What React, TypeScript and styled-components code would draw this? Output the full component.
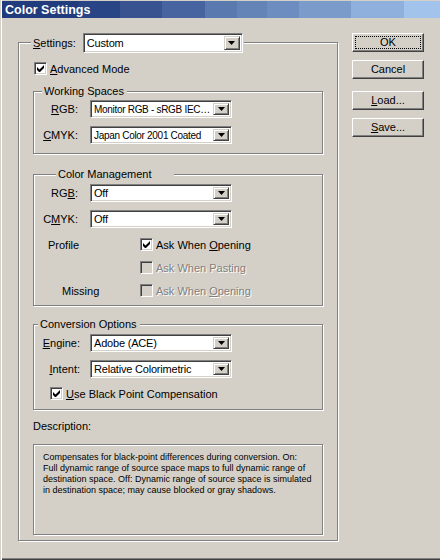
import * as React from "react";
import styled, { createGlobalStyle } from "styled-components";

const face = "#d4d0c8";
const shadow = "#808080";
const darkShadow = "#404040";

const GlobalStyle = createGlobalStyle`
  html, body {
    margin: 0;
    padding: 0;
    background: ${face};
  }
  body {
    font-family: "Liberation Sans", Arial, sans-serif;
    font-size: 11px;
    color: #000;
  }
`;

const Window = styled.div`
  width: 440px;
  height: 560px;
  box-sizing: border-box;
  background: ${face};
  display: flex;
  flex-direction: column;
  box-shadow: inset 1px 0 0 ${face}, inset 2px 0 0 #fff,
    inset 0 -1px 0 ${darkShadow}, inset 0 -2px 0 ${shadow};
`;

const TitleBar = styled.div`
  height: 17px;
  margin: 1px 0 0 2px;
  padding-left: 3px;
  display: flex;
  align-items: center;
  color: #fff;
  font-weight: bold;
  font-size: 12.5px;
  background: linear-gradient(
    to right,
    #203c7c 0 77px,
    #2a4585 77px 118px,
    #385390 118px 160px,
    #4864a0 160px 203px,
    #5a79ae 203px 235px,
    #6483b6 235px 265px,
    #6d8dc0 265px 297px,
    #7b9bcb 297px 349px,
    #8fb0dc 349px 402px,
    #a2c3ec 402px
  );
`;

const Body = styled.div`
  display: flex;
  padding: 15px 0 0 18px;
`;

const Group = styled.div<{ $mt?: number; $pad?: string; $height?: number }>`
  position: relative;
  box-sizing: border-box;
  margin-top: ${(p) => p.$mt ?? 0}px;
  padding: ${(p) => p.$pad ?? "0"};
  ${(p) => (p.$height ? `height: ${p.$height}px;` : "")}
  border: 1px solid ${shadow};
  box-shadow: inset 1px 1px 0 #fff, 1px 1px 0 #fff;
  display: flex;
  flex-direction: column;
`;

const OuterGroup = styled(Group)`
  width: 320px;
`;

const Legend = styled.div<{ $left: number; $top?: number }>`
  position: absolute;
  top: ${(p) => p.$top ?? -7}px;
  left: ${(p) => p.$left}px;
  padding: 0 ${(p) => (p.$top ? 1 : 3)}px 0 2px;
  background: ${face};
  line-height: 13px;
  display: flex;
  align-items: center;
  gap: 7px;
`;

const Row = styled.div<{ $h: number; $mt?: number; $pl?: number }>`
  display: flex;
  align-items: center;
  height: ${(p) => p.$h}px;
  margin-top: ${(p) => p.$mt ?? 0}px;
  padding-left: ${(p) => p.$pl ?? 0}px;
`;

const FieldLabel = styled.span<{ $w: number; $align?: string; $pl?: number; $gap?: number }>`
  box-sizing: border-box;
  width: ${(p) => p.$w}px;
  flex: none;
  text-align: ${(p) => p.$align ?? "right"};
  padding-left: ${(p) => p.$pl ?? 0}px;
  margin-right: ${(p) => p.$gap ?? 0}px;
  white-space: nowrap;
`;

const U = styled.span`
  text-decoration: underline;
  text-underline-offset: 1px;
`;

const SelectBox = styled.div<{ $w: number; $h: number }>`
  box-sizing: border-box;
  width: ${(p) => p.$w}px;
  height: ${(p) => p.$h}px;
  flex: none;
  display: flex;
  align-items: center;
  background: #fff;
  border: 1px solid;
  border-color: ${shadow} #fff #fff ${shadow};
  box-shadow: inset 1px 1px 0 ${darkShadow}, inset -1px -1px 0 ${face};
  padding: 2px 2px 2px 3px;
`;

const SelectText = styled.span<{ $small?: boolean }>`
  flex: 1;
  min-width: 0;
  overflow: hidden;
  text-overflow: ellipsis;
  white-space: nowrap;
  line-height: 13px;
  font-size: ${(p) => (p.$small ? 10 : 11)}px;
  letter-spacing: ${(p) => (p.$small ? -0.3 : -0.2)}px;
`;

const ArrowButton = styled.span`
  box-sizing: border-box;
  flex: none;
  width: 16px;
  height: 100%;
  background: ${face};
  border: 1px solid;
  border-color: ${face} ${darkShadow} ${darkShadow} ${face};
  box-shadow: inset 1px 1px 0 #fff, inset -1px -1px 0 ${shadow};
  display: flex;
  align-items: center;
  justify-content: center;
`;

const Select: React.FC<{ w: number; h: number; value: string; small?: boolean }> = ({
  w,
  h,
  value,
  small,
}) => (
  <SelectBox $w={w} $h={h}>
    <SelectText $small={small} title={value}>
      {value}
    </SelectText>
    <ArrowButton>
      <svg width="7" height="4" viewBox="0 0 7 4">
        <path d="M0 0h7L3.5 4z" fill="#000" />
      </svg>
    </ArrowButton>
  </SelectBox>
);

const CheckBox = styled.span<{ $disabled?: boolean }>`
  box-sizing: border-box;
  width: 13px;
  height: 13px;
  flex: none;
  background: ${(p) => (p.$disabled ? face : "#fff")};
  border: 1px solid;
  border-color: ${shadow} #fff #fff ${shadow};
  box-shadow: inset 1px 1px 0 ${darkShadow}, inset -1px -1px 0 ${face};
  display: flex;
  align-items: center;
  justify-content: center;
`;

const CheckText = styled.span<{ $disabled?: boolean }>`
  margin-left: 3px;
  white-space: nowrap;
  color: ${(p) => (p.$disabled ? shadow : "#000")};
  text-shadow: ${(p) => (p.$disabled ? "1px 1px 0 #fff" : "none")};
`;

const Check: React.FC<{ checked?: boolean; disabled?: boolean; children: React.ReactNode }> = ({
  checked,
  disabled,
  children,
}) => (
  <>
    <CheckBox $disabled={disabled}>
      {checked && (
        <svg width="7" height="7" viewBox="0 0 7 7">
          <path d="M0 2v3l2 2h1l4-4V0L2.5 4.5z" fill="#000" />
        </svg>
      )}
    </CheckBox>
    <CheckText $disabled={disabled}>{children}</CheckText>
  </>
);

const DescLabel = styled.div`
  margin-top: 10px;
  line-height: 13px;
`;

const DescBox = styled.div`
  box-sizing: border-box;
  margin-top: 11px;
  height: 91px;
  padding: 7px 9px;
  border: 1px solid ${shadow};
  box-shadow: inset 1px 1px 0 #fff, 1px 1px 0 #fff;
  font-size: 9px;
  line-height: 11px;
`;

const ButtonColumn = styled.div`
  margin-left: 14px;
  display: flex;
  flex-direction: column;
`;

const Button = styled.div<{ $mt?: number; $focused?: boolean }>`
  position: relative;
  box-sizing: border-box;
  width: 72px;
  height: 19px;
  margin-top: ${(p) => p.$mt ?? 0}px;
  background: ${face};
  border: 1px solid;
  border-color: #fff ${darkShadow} ${darkShadow} #fff;
  box-shadow: inset -1px -1px 0 ${shadow}, inset 1px 1px 0 ${face};
  display: flex;
  align-items: center;
  justify-content: center;
  line-height: 13px;

  ${(p) =>
    p.$focused &&
    `&::after {
      content: "";
      position: absolute;
      inset: 2px;
      border: 1px dotted #000;
    }`}
`;

export default function App() {
  return (
    <>
      <GlobalStyle />
      <Window>
        <TitleBar>Color Settings</TitleBar>
        <Body>
          <OuterGroup $mt={9} $height={499} $pad="19px 14px 0 14px">
            <Legend $left={12} $top={-10}>
              <span>
                <U>S</U>ettings:
              </span>
              <Select w={160} h={20} value="Custom" />
            </Legend>

            <Row $h={13} $pl={1}>
              <Check checked>
                <U>A</U>dvanced Mode
              </Check>
            </Row>

            <Group $mt={16} $pad="8px 0 9px 0">
              <Legend $left={8}>Working Spaces</Legend>
              <Row $h={18}>
                <FieldLabel $w={44} $gap={12}>
                  <U>R</U>GB:
                </FieldLabel>
                <Select w={142} h={18} small value="Monitor RGB - sRGB IEC61966-2.1" />
              </Row>
              <Row $h={18} $mt={8}>
                <FieldLabel $w={44} $gap={12}>
                  <U>C</U>MYK:
                </FieldLabel>
                <Select w={142} h={18} small value="Japan Color 2001 Coated" />
              </Row>
            </Group>

            <Group $mt={20} $pad="9px 0 8px 0">
              <Legend $left={22}>
                Color Management
                <span style={{ width: 12 }} />
              </Legend>
              <Row $h={18}>
                <FieldLabel $w={44} $gap={12}>
                  RG<U>B</U>:
                </FieldLabel>
                <Select w={142} h={18} value="Off" />
              </Row>
              <Row $h={18} $mt={8}>
                <FieldLabel $w={44} $gap={12}>
                  C<U>M</U>YK:
                </FieldLabel>
                <Select w={142} h={18} value="Off" />
              </Row>
              <Row $h={13} $mt={10}>
                <FieldLabel $w={106} $align="left" $pl={14}>
                  Profile
                </FieldLabel>
                <Check checked>
                  Ask When <U>O</U>pening
                </Check>
              </Row>
              <Row $h={13} $mt={10}>
                <FieldLabel $w={106} />
                <Check disabled>Ask When Pasting</Check>
              </Row>
              <Row $h={13} $mt={10}>
                <FieldLabel $w={106} $align="left" $pl={28}>
                  Missing
                </FieldLabel>
                <Check disabled>
                  Ask When <U>O</U>pening
                </Check>
              </Row>
            </Group>

            <Group $mt={18} $pad="9px 0 9px 0">
              <Legend $left={4}>Conversion Options</Legend>
              <Row $h={18}>
                <FieldLabel $w={46} $gap={10}>
                  <U>E</U>ngine:
                </FieldLabel>
                <Select w={142} h={18} value="Adobe (ACE)" />
              </Row>
              <Row $h={18} $mt={8}>
                <FieldLabel $w={46} $gap={10}>
                  <U>I</U>ntent:
                </FieldLabel>
                <Select w={142} h={18} value="Relative Colorimetric" />
              </Row>
              <Row $h={13} $mt={9} $pl={16}>
                <Check checked>
                  <U>U</U>se Black Point Compensation
                </Check>
              </Row>
            </Group>

            <DescLabel>Description:</DescLabel>
            <DescBox>
              Compensates for black-point differences during conversion. On:
              <br />
              Full dynamic range of source space maps to full dynamic range of
              <br />
              destination space. Off: Dynamic range of source space is simulated
              <br />
              in destination space; may cause blocked or gray shadows.
            </DescBox>
          </OuterGroup>

          <ButtonColumn>
            <Button $focused>OK</Button>
            <Button $mt={8}>Cancel</Button>
            <Button $mt={12}>
              <U>L</U>oad...
            </Button>
            <Button $mt={8}>
              <U>S</U>ave...
            </Button>
          </ButtonColumn>
        </Body>
      </Window>
    </>
  );
}
